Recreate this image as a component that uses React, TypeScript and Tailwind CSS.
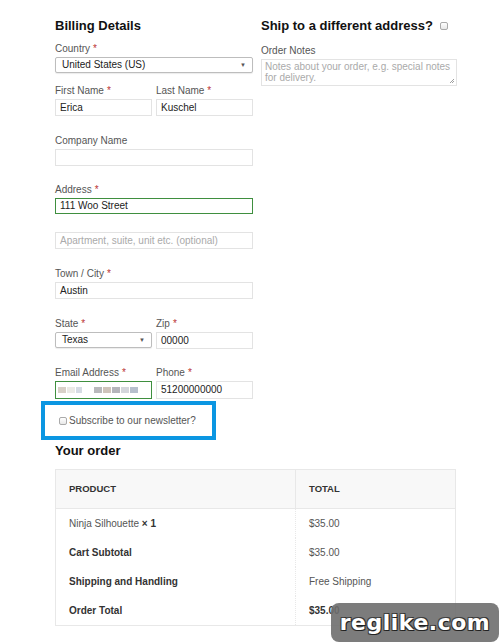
import React from 'react';

const font = { fontFamily: '"Liberation Sans", Arial, sans-serif' };

function Label({ text, required = true }: { text: string; required?: boolean }) {
  return (
    <div className="text-[10px] leading-[12px] text-[#555] mb-[2px] whitespace-nowrap">
      {text}
      {required && <span className="text-[#b33] ml-[3px]">*</span>}
    </div>
  );
}

function Input({
  value,
  placeholder,
  green = false,
  h = 'h-[17px]',
}: {
  value?: string;
  placeholder?: string;
  green?: boolean;
  h?: string;
}) {
  return (
    <div
      className={`${h} border ${
        green ? 'border-[#3f8f3f]' : 'border-[#e3e3e3]'
      } bg-white flex items-center px-[4px] text-[10px] leading-[12px]`}
    >
      {value ? (
        <span className="text-[#222]">{value}</span>
      ) : (
        <span className="text-[#aaa]">{placeholder}</span>
      )}
    </div>
  );
}

function Select({ value }: { value: string }) {
  return (
    <div className="h-[16px] border border-[#bdbdbd] rounded-[2px] bg-white flex items-center justify-between pl-[6px] pr-[6px] text-[10px] leading-[12px] text-[#222] shadow-[0_1px_1px_rgba(0,0,0,0.08)]">
      <span>{value}</span>
      <span className="text-[6px] text-[#555]">▼</span>
    </div>
  );
}

function Checkbox() {
  return (
    <span className="inline-block shrink-0 w-[8px] h-[8px] border border-[#aaa] rounded-[2px] bg-gradient-to-b from-white to-[#e8e8e8]" />
  );
}

export default function App() {
  return (
    <div className="relative h-[644px] w-[500px] overflow-hidden bg-white" style={font}>
      <div className="pt-[17px] pl-[55px] flex gap-[8px]">
        {/* billing */}
        <div className="w-[198px] flex flex-col">
          <h3 className="text-[13px] leading-[18px] font-bold text-[#111] mb-[8px]">Billing Details</h3>

          <Label text="Country" />
          <Select value="United States (US)" />

          <div className="mt-[12px] grid grid-cols-[97px_97px] gap-x-[4px]">
            <div>
              <Label text="First Name" />
              <Input value="Erica" />
            </div>
            <div>
              <Label text="Last Name" />
              <Input value="Kuschel" />
            </div>
          </div>

          <div className="mt-[19px]">
            <Label text="Company Name" required={false} />
            <Input />
          </div>

          <div className="mt-[18px]">
            <Label text="Address" />
            <Input value="111 Woo Street" green h="h-[16px]" />
          </div>

          <div className="mt-[18px]">
            <Input placeholder="Apartment, suite, unit etc. (optional)" />
          </div>

          <div className="mt-[19px]">
            <Label text="Town / City" />
            <Input value="Austin" />
          </div>

          <div className="mt-[19px] grid grid-cols-[97px_97px] gap-x-[4px]">
            <div>
              <Label text="State" />
              <Select value="Texas" />
            </div>
            <div>
              <Label text="Zip" />
              <div className="mt-[1px]">
                <Input value="00000" />
              </div>
            </div>
          </div>

          <div className="mt-[18px] grid grid-cols-[97px_97px] gap-x-[4px]">
            <div>
              <Label text="Email Address" />
              <div className="h-[18px] border border-[#3f8f3f] flex items-center gap-[1px] px-[2px]">
                <span className="w-[8px] h-[6px] bg-[#d8d0c8]" />
                <span className="w-[8px] h-[6px] bg-[#ebeae6]" />
                <span className="w-[6px] h-[6px] bg-[#d5dbe3]" />
                <span className="w-[10px] h-[6px]" />
                <span className="w-[8px] h-[6px] bg-[#b9b9bc]" />
                <span className="w-[8px] h-[6px] bg-[#cfc4bb]" />
                <span className="w-[8px] h-[6px] bg-[#b5b5bb]" />
                <span className="w-[8px] h-[6px] bg-[#d4d6dc]" />
                <span className="w-[8px] h-[6px] bg-[#b7bfcd]" />
              </div>
            </div>
            <div>
              <Label text="Phone" />
              <Input value="51200000000" h="h-[18px]" />
            </div>
          </div>

          <div className="-ml-[14px] mt-[2px] w-[175px] h-[39px] border-[4px] border-[#0b96e2] bg-white flex items-center pl-[14px] gap-[2px]">
            <Checkbox />
            <span className="text-[10px] leading-[12px] text-[#555]">Subscribe to our newsletter?</span>
          </div>
        </div>

        {/* shipping */}
        <div className="w-[196px] flex flex-col">
          <h3 className="text-[13px] leading-[18px] font-bold text-[#111] mb-[10px] flex items-center gap-[7px] whitespace-nowrap">
            Ship to a different address?
            <Checkbox />
          </h3>
          <Label text="Order Notes" required={false} />
          <div className="relative h-[27px] border border-[#e3e3e3] px-[3px] pt-[1px] text-[10px] leading-[11px] text-[#aaa]">
            Notes about your order, e.g. special notes for delivery.
            <svg className="absolute right-[1px] bottom-[1px]" width="6" height="6" viewBox="0 0 6 6">
              <path d="M5 1 L1 5 M5 3 L3 5" stroke="#888" strokeWidth="0.8" />
            </svg>
          </div>
        </div>
      </div>

      {/* order */}
      <div className="pl-[55px] w-[456px] mt-[2px]">
        <h3 className="text-[13px] leading-[18px] font-bold text-[#111] mb-[9px]">Your order</h3>
        <div className="border border-[#e8e8e8] text-[10px] leading-[12px]">
          <div className="grid grid-cols-[240px_1fr] h-[39px] bg-[#f8f8f8] border-b border-[#e8e8e8] font-bold text-[#333] text-[9.5px]">
            <div className="flex items-center pl-[13px] border-r border-[#e8e8e8]">PRODUCT</div>
            <div className="flex items-center pl-[13px]">TOTAL</div>
          </div>
          {[
            [<span>Ninja Silhouette <b className="text-[#333]">× 1</b></span>, '$35.00', false, false],
            ['Cart Subtotal', '$35.00', true, false],
            ['Shipping and Handling', 'Free Shipping', true, false],
            ['Order Total', '$35.00', true, true],
          ].map(([a, b, boldA, boldB], i) => (
            <div key={i} className="grid grid-cols-[240px_1fr] h-[29px]">
              <div
                className={`flex items-center pl-[13px] border-r border-dotted border-[#e8e8e8] ${
                  boldA ? 'font-bold text-[#333]' : 'text-[#555]'
                }`}
              >
                {a as React.ReactNode}
              </div>
              <div className={`flex items-center pl-[13px] ${boldB ? 'font-bold text-[#333]' : 'text-[#555]'}`}>
                {b as React.ReactNode}
              </div>
            </div>
          ))}
        </div>
      </div>

      {/* watermark */}
      <div className="absolute left-[331px] top-[603px] w-[168px] h-[39px] rounded-[8px] bg-[#6e6e6e]/90 flex items-center justify-center">
        <span
          className="text-white font-bold text-[22px] leading-none tracking-[0.5px]"
          style={{ fontFamily: '"DejaVu Sans", sans-serif', textShadow: '1px 1px 0 #222, -1px -1px 0 #444, 1px -1px 0 #333, -1px 1px 0 #333' }}
        >
          reglike.com
        </span>
      </div>
    </div>
  );
}
